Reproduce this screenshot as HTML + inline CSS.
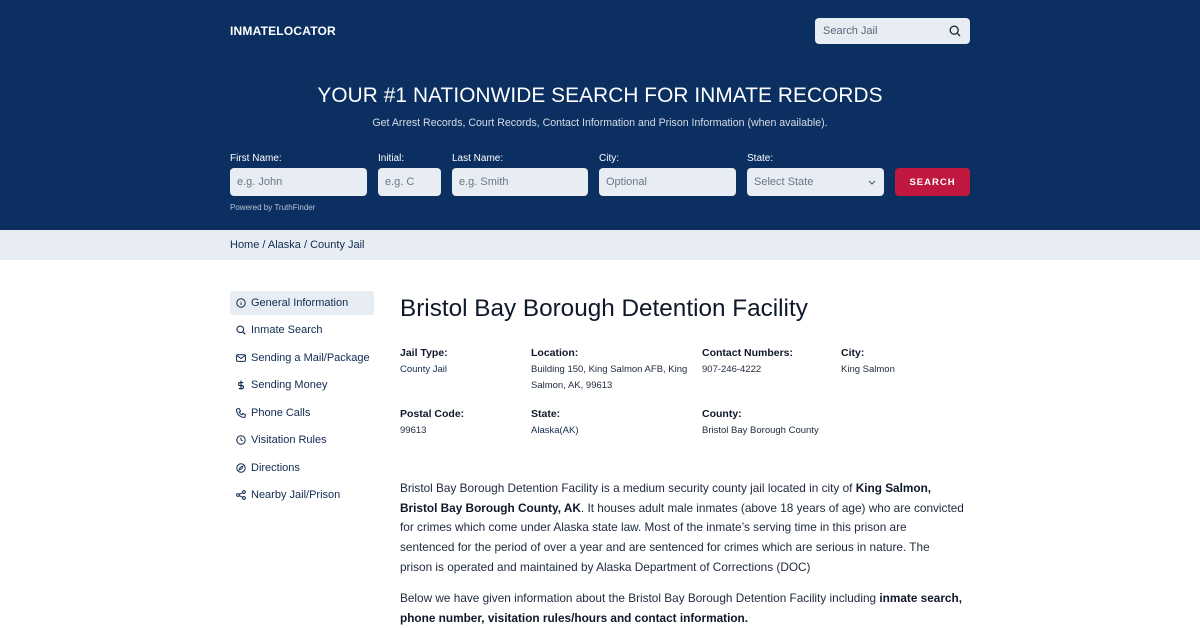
<!DOCTYPE html>
<html><head><meta charset="utf-8"><style>
*{margin:0;padding:0;box-sizing:border-box}
body{width:1200px;height:620px;overflow:hidden;font-family:"Liberation Sans",sans-serif;background:#fff;color:#1e293b}
.hdr{position:absolute;left:0;top:0;width:1200px;height:230px;background:#0b2f61;color:#fff}
.logo{position:absolute;left:230px;top:24px;font-size:12px;font-weight:bold;letter-spacing:.2px}
.sj{position:absolute;left:815px;top:18px;width:155px;height:26px;background:#e8edf4;border-radius:4px;font-size:11px;color:#5b6577;padding:7px 8px}
.sj svg{position:absolute;right:9px;top:7px}
h1{position:absolute;left:0;width:1200px;top:84px;text-align:center;font-size:20.8px;font-weight:normal;letter-spacing:.1px}
.sub{position:absolute;left:0;width:1200px;top:117px;text-align:center;font-size:10.6px;color:#d6dce6}
.lbl{position:absolute;top:153px;font-size:10px;color:#fff}
.inp{position:absolute;top:168px;height:28px;background:#e8edf4;border-radius:4px;font-size:11px;color:#6b7587;padding:8px 7px}
.btn{position:absolute;left:895px;top:168px;width:75px;height:28px;background:#c0173f;border-radius:4px;color:#fff;font-size:9.5px;font-weight:bold;letter-spacing:1px;text-align:center;padding-top:9px}
.pw{position:absolute;left:230px;top:203px;font-size:8px;color:#b9c3d3}
.bc{position:absolute;left:0;top:230px;width:1200px;height:30px;background:#e8edf4;font-size:11px;color:#0f2a50;padding:9px 230px}
.nav{position:absolute;left:230px;width:144px;height:24px;font-size:11px;color:#0f2a50;padding:6px 0 0 21px}
.nav svg{position:absolute;left:6px;top:7px}
.nav.a{background:#e8edf4;border-radius:3px}
.title{position:absolute;left:400px;top:295px;font-size:24.3px;color:#0f172a;font-weight:normal}
.k{position:absolute;font-size:10.5px;font-weight:bold;color:#0f172a}
.v{position:absolute;font-size:9.5px;color:#1e293b;line-height:16px}
.v.b{color:#0f2a50}
.p{position:absolute;left:400px;width:580px;font-size:11.8px;line-height:19.7px;color:#1e293b;white-space:nowrap}
.p b{color:#0f172a}
</style></head><body>
<div class="hdr">
<div class="logo">INMATELOCATOR</div>
<div class="sj">Search Jail<svg width="12" height="12" viewBox="0 0 12 12" fill="none" stroke="#1e293b" stroke-width="1.3"><circle cx="5.2" cy="5.2" r="4"/><path d="M8.2 8.2L11 11"/></svg></div>
<h1>YOUR #1 NATIONWIDE SEARCH FOR INMATE RECORDS</h1>
<div class="sub">Get Arrest Records, Court Records, Contact Information and Prison Information (when available).</div>
<div class="lbl" style="left:230px">First Name:</div>
<div class="lbl" style="left:378px">Initial:</div>
<div class="lbl" style="left:452px">Last Name:</div>
<div class="lbl" style="left:599px">City:</div>
<div class="lbl" style="left:747px">State:</div>
<div class="inp" style="left:230px;width:137px">e.g. John</div>
<div class="inp" style="left:378px;width:63px">e.g. C</div>
<div class="inp" style="left:452px;width:136px">e.g. Smith</div>
<div class="inp" style="left:599px;width:137px">Optional</div>
<div class="inp" style="left:747px;width:137px">Select State<svg style="position:absolute;right:8px;top:12px" width="8" height="5" viewBox="0 0 8 5" fill="none" stroke="#475569" stroke-width="1"><path d="M1 1l3 3 3-3"/></svg></div>
<div class="btn">SEARCH</div>
<div class="pw">Powered by TruthFinder</div>
</div>
<div class="bc">Home / Alaska / County Jail</div>

<div class="nav a" style="top:291px"><svg width="10" height="10" viewBox="0 0 10 10" fill="none" stroke="#0f2a50" stroke-width="1"><circle cx="5" cy="5" r="4.2"/><path d="M5 4.5v2.5M5 3v.2"/></svg>General Information</div>
<div class="nav" style="top:318px"><svg width="10" height="10" viewBox="0 0 10 10" fill="none" stroke="#0f2a50" stroke-width="1.1"><circle cx="4.3" cy="4.3" r="3.3"/><path d="M6.8 6.8L9.3 9.3"/></svg>Inmate Search</div>
<div class="nav" style="top:346px"><svg width="10" height="10" viewBox="0 0 10 10" fill="none" stroke="#0f2a50" stroke-width="1"><rect x=".6" y="1.8" width="8.8" height="6.6" rx="1"/><path d="M.8 2.5L5 5.5 9.2 2.5"/></svg>Sending a Mail/Package</div>
<div class="nav" style="top:373px"><svg width="10" height="10" viewBox="0 0 10 10" fill="none" stroke="#0f2a50" stroke-width="1.1"><path d="M5 .5v9M7.3 2.6H4a1.5 1.5 0 000 3h2a1.5 1.5 0 010 3H2.6"/></svg>Sending Money</div>
<div class="nav" style="top:401px"><svg width="10" height="10" viewBox="0 0 10 10" fill="none" stroke="#0f2a50" stroke-width="1"><path d="M1.5 .8h2l1 2.5-1.3.8a5.5 5.5 0 002.7 2.7l.8-1.3 2.5 1v2a1 1 0 01-1 1A8 8 0 01.5 1.8a1 1 0 011-1z"/></svg>Phone Calls</div>
<div class="nav" style="top:428px"><svg width="10" height="10" viewBox="0 0 10 10" fill="none" stroke="#0f2a50" stroke-width="1"><circle cx="5" cy="5" r="4.2"/><path d="M5 2.5V5l1.8 1"/></svg>Visitation Rules</div>
<div class="nav" style="top:456px"><svg width="10" height="10" viewBox="0 0 10 10" fill="none" stroke="#0f2a50" stroke-width="1"><circle cx="5" cy="5" r="4.2"/><path d="M6.8 3.2L5.8 5.8 3.2 6.8 4.2 4.2z"/></svg>Directions</div>
<div class="nav" style="top:483px"><svg width="10" height="10" viewBox="0 0 10 10" fill="none" stroke="#0f2a50" stroke-width="1"><circle cx="2" cy="5" r="1.4"/><circle cx="8" cy="2" r="1.4"/><circle cx="8" cy="8" r="1.4"/><path d="M3.3 4.3L6.7 2.7M3.3 5.7L6.7 7.3"/></svg>Nearby Jail/Prison</div>

<div class="title">Bristol Bay Borough Detention Facility</div>
<div class="k" style="left:400px;top:347px">Jail Type:</div>
<div class="v b" style="left:400px;top:362px">County Jail</div>
<div class="k" style="left:531px;top:347px">Location:</div>
<div class="v" style="left:531px;top:362px">Building 150, King Salmon AFB, King<br>Salmon, AK, 99613</div>
<div class="k" style="left:702px;top:347px">Contact Numbers:</div>
<div class="v" style="left:702px;top:362px">907-246-4222</div>
<div class="k" style="left:841px;top:347px">City:</div>
<div class="v" style="left:841px;top:362px">King Salmon</div>
<div class="k" style="left:400px;top:408px">Postal Code:</div>
<div class="v" style="left:400px;top:423px">99613</div>
<div class="k" style="left:531px;top:408px">State:</div>
<div class="v b" style="left:531px;top:423px">Alaska(AK)</div>
<div class="k" style="left:702px;top:408px">County:</div>
<div class="v" style="left:702px;top:423px">Bristol Bay Borough County</div>

<div class="p" style="top:479px">Bristol Bay Borough Detention Facility is a medium security county jail located in city of <b>King Salmon,</b><br><b>Bristol Bay Borough County, AK</b>. It houses adult male inmates (above 18 years of age) who are convicted<br>for crimes which come under Alaska state law. Most of the inmate’s serving time in this prison are<br>sentenced for the period of over a year and are sentenced for crimes which are serious in nature. The<br>prison is operated and maintained by Alaska Department of Corrections (DOC)</div>
<div class="p" style="top:589px">Below we have given information about the Bristol Bay Borough Detention Facility including <b>inmate search,</b><br><b>phone number, visitation rules/hours and contact information.</b></div>
</body></html>
